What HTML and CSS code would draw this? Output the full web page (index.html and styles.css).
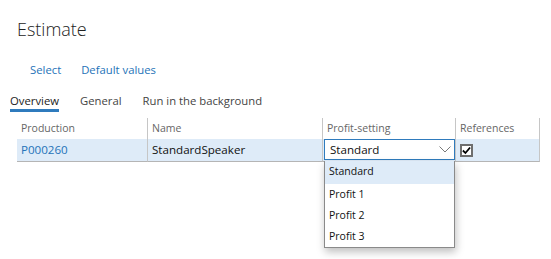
FILE: index.html
```html
<!DOCTYPE html>
<html>

<head>
    <title>Estimate</title>
    <link rel="stylesheet" href="styles.css">
</head>

<body>
    <div id="page">
        <h1 class="title">Estimate</h1>
        <div class="actions">
            <a href="#">Select</a>
            <a href="#">Default values</a>
        </div>
        <div class="tabs">
            <span class="tab active">Overview</span>
            <span class="tab">General</span>
            <span class="tab">Run in the background</span>
        </div>
        <div class="grid">
            <div class="cell head">Production</div>
            <div class="cell head">Name</div>
            <div class="cell head">Profit-setting</div>
            <div class="cell head">References</div>

            <div class="cell row"><a href="#">P000260</a></div>
            <div class="cell row">StandardSpeaker</div>
            <div class="cell row combo">
                <div class="select">
                    <span>Standard</span>
                    <svg width="12" height="7" viewBox="0 0 12 7">
                        <path d="M0.5 0.5 L6 6 L11.5 0.5" fill="none" stroke="#7a7a7a" stroke-width="1"/>
                    </svg>
                </div>
                <ul class="dropdown">
                    <li class="picked">Standard</li>
                    <li>Profit 1</li>
                    <li>Profit 2</li>
                    <li>Profit 3</li>
                </ul>
            </div>
            <div class="cell row">
                <span class="check">
                    <svg width="10" height="9" viewBox="0 0 10 9">
                        <path d="M1 4.5 L3.8 7.3 L9 1.2" fill="none" stroke="#000" stroke-width="2"/>
                    </svg>
                </span>
            </div>
        </div>
    </div>
</body>

</html>
```

FILE: styles.css
```css
html,
body {
    min-height: 100vh;
}

body {
    margin: 0;
    padding: 0;
    background: #fff;
    color: #222;
    font-family: "Open Sans", "Noto Sans", Arial, sans-serif;
    font-size: 11.3px;
}

a {
    color: #2573b8;
    text-decoration: none;
}

#page {
    display: flex;
    flex-direction: column;
    min-height: 259px;
}

.title {
    margin: 0;
    padding: 15px 0 0 17px;
    height: 30px;
    font-size: 18px;
    font-weight: 300;
    line-height: 28px;
    color: #222;
}

.actions {
    display: flex;
    gap: 20px;
    padding: 16px 0 0 30px;
    height: 21px;
    line-height: 17px;
}

.tabs {
    display: flex;
    gap: 21px;
    padding: 10px 0 0 10px;
    height: 26px;
}

.tab {
    color: #444;
    line-height: 18px;
    height: 17px;
}

.tab.active {
    color: #222;
    border-bottom: 3px solid #2f7bbd;
}

.grid {
    display: grid;
    grid-template-columns: 131px 175px 133px 84px;
    margin: 0 0 0 17px;
    width: 523px;
    position: relative;
}

.cell {
    border-right: 1px solid #c6c6c6;
    box-sizing: border-box;
    padding-left: 4px;
    white-space: nowrap;
}

.head {
    height: 21px;
    line-height: 21px;
    color: #666;
    font-size: 10.5px;
}

.row {
    height: 23px;
    line-height: 22px;
    background: #deebf8;
    border-bottom: 1px solid #b5b5b5;
    font-size: 11.6px;
    color: #111;
}

.combo {
    padding-left: 1px;
    position: relative;
}

.select {
    display: flex;
    align-items: center;
    justify-content: space-between;
    box-sizing: border-box;
    width: 131px;
    height: 21px;
    border: 1px solid #2f7bbd;
    background: #fff;
    padding: 0 3px 0 5px;
}

.dropdown {
    list-style: none;
    margin: 0;
    padding: 0;
    position: absolute;
    top: 22px;
    left: 1px;
    width: 131px;
    box-sizing: border-box;
    background: #fff;
    border: 1px solid #8a8a8a;
    border-top: none;
    box-shadow: 1px 4px 8px rgba(0, 0, 0, 0.25);
    z-index: 2;
}

.dropdown li {
    height: 21px;
    line-height: 21px;
    padding-left: 4px;
    font-size: 10.5px;
    color: #111;
}

.dropdown li.picked {
    background: #deebf8;
    height: 23px;
}

.check {
    display: inline-flex;
    align-items: center;
    justify-content: center;
    box-sizing: border-box;
    width: 13px;
    height: 13px;
    margin-top: 5px;
    border: 2px solid #6e6e6e;
    background: #fff;
    vertical-align: top;
}
```
